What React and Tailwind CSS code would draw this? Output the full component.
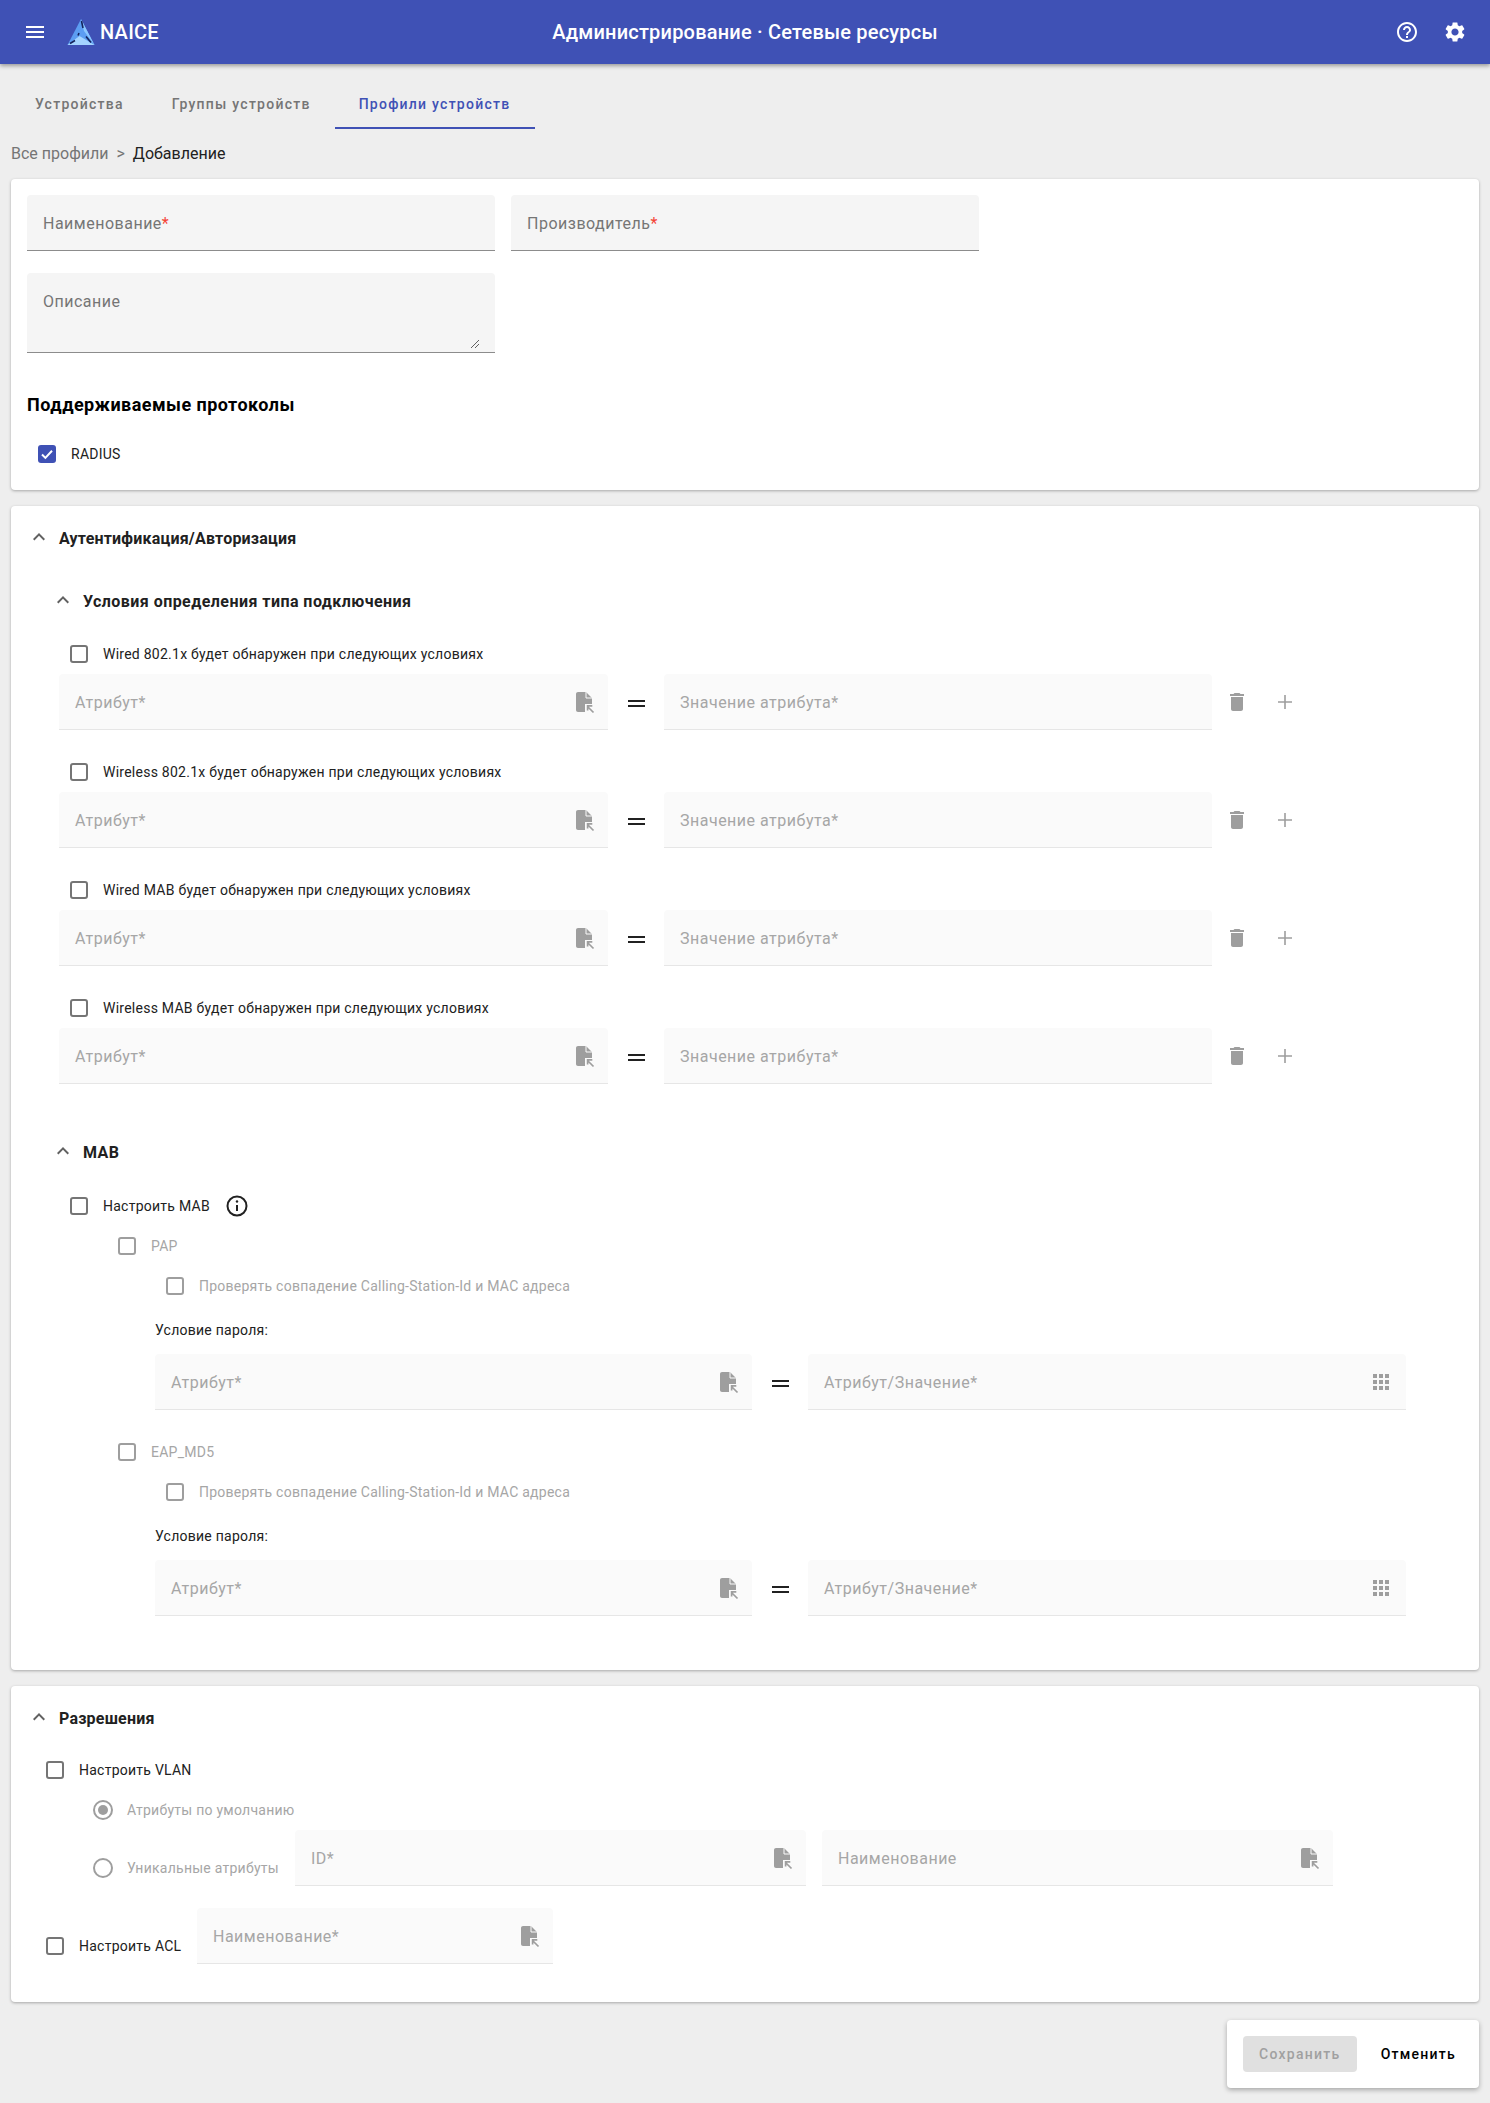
import React from 'react';

const paths = {
  menu: "M3 18h18v-2H3v2zm0-5h18v-2H3v2zm0-7v2h18V6H3z",
  help: "M11 18h2v-2h-2v2zm1-16C6.48 2 2 6.48 2 12s4.48 10 10 10 10-4.48 10-10S17.52 2 12 2zm0 18c-4.41 0-8-3.59-8-8s3.59-8 8-8 8 3.59 8 8-3.59 8-8 8zm0-14c-2.21 0-4 1.79-4 4h2c0-1.1.9-2 2-2s2 .9 2 2c0 2-3 1.75-3 5h2c0-2.25 3-2.5 3-5 0-2.21-1.79-4-4-4z",
  settings: "M19.14,12.94c0.04-0.3,0.06-0.61,0.06-0.94c0-0.32-0.02-0.64-0.07-0.94l2.03-1.58c0.18-0.14,0.23-0.41,0.12-0.61 l-1.92-3.32c-0.12-0.22-0.37-0.29-0.59-0.22l-2.39,0.96c-0.5-0.38-1.03-0.7-1.62-0.94L14.4,2.81c-0.04-0.24-0.24-0.41-0.48-0.41 h-3.84c-0.24,0-0.43,0.17-0.47,0.41L9.25,5.35C8.66,5.59,8.12,5.92,7.63,6.29L5.24,5.33c-0.22-0.08-0.47,0-0.59,0.22L2.74,8.87 C2.62,9.08,2.66,9.34,2.86,9.48l2.03,1.58C4.84,11.36,4.8,11.69,4.8,12s0.02,0.64,0.07,0.94l-2.03,1.58 c-0.18,0.14-0.23,0.41-0.12,0.61l1.92,3.32c0.12,0.22,0.37,0.29,0.59,0.22l2.39-0.96c0.5,0.38,1.03,0.7,1.62,0.94l0.36,2.54 c0.05,0.24,0.24,0.41,0.48,0.41h3.84c0.24,0,0.44-0.17,0.47-0.41l0.36-2.54c0.59-0.24,1.13-0.56,1.62-0.94l2.39,0.96 c0.22,0.08,0.47,0,0.59-0.22l1.92-3.32c0.12-0.22,0.07-0.47-0.12-0.61L19.14,12.94z M12,15.6c-1.98,0-3.6-1.62-3.6-3.6 s1.62-3.6,3.6-3.6s3.6,1.62,3.6,3.6S13.98,15.6,12,15.6z",
  trash: "M6 19c0 1.1.9 2 2 2h8c1.1 0 2-.9 2-2V7H6v12zM19 4h-3.5l-1-1h-5l-1 1H5v2h14V4z",
  chevron: "M12 8l-6 6 1.41 1.41L12 10.83l4.59 4.58L18 14z",
  apps: "M4 8h4V4H4v4zm6 12h4v-4h-4v4zm-6 0h4v-4H4v4zm0-6h4v-4H4v4zm6 0h4v-4h-4v4zm6-10v4h4V4h-4zm-6 4h4V4h-4v4zm6 6h4v-4h-4v4zm0 6h4v-4h-4v4z",
};

function Icon({ name, className }) {
  return (
    <svg viewBox="0 0 24 24" fill="currentColor" className={className}>
      <path d={paths[name]} />
    </svg>
  );
}

function FileIcon() {
  return (
    <svg viewBox="0 0 24 24" className="w-6 h-6 shrink-0 text-[#9e9e9e]">
      <path fill="currentColor" d="M6 2h8l6 6v6h-7v8H6C4.9 22 4 21.1 4 20V4c0-1.1.9-2 2-2z" />
      <path fill="none" stroke="#fafafa" strokeWidth="1" d="M14 2v6h6" />
      <path fill="none" stroke="currentColor" strokeWidth="1.7" d="M16 17l5.5 5.5M15.6 20.5v-4.7h4.7" />
    </svg>
  );
}

function Logo() {
  return (
    <svg viewBox="0 0 28 28" className="w-7 h-7 shrink-0">
      <path fill="#5c9df2" d="M14 1L0.5 27h27z" />
      <path fill="#8cc8ff" d="M14 1l3 12 10.5 14z" />
      <path fill="#a4d4ff" d="M0.5 27l12-9 15 9z" />
      <path fill="none" stroke="#14235c" strokeWidth="1.6" d="M14.5 3l1.5 7M12 15l-1 2.5M3 25.5l5-3M19 18.5l5 6" />
    </svg>
  );
}

function Check({ label, checked, disabled, children }) {
  return (
    <div className={`flex items-center gap-[15px] h-6 text-[14px] tracking-[0.25px] ${disabled ? 'text-[#a6a6a6]' : 'text-[#212121]'}`}>
      {checked ? (
        <span className="w-[18px] h-[18px] shrink-0 rounded-[3px] bg-[#3f51b5] flex items-center justify-center">
          <svg viewBox="0 0 18 18" className="w-[18px] h-[18px]">
            <path d="M4 9.5l3.4 3.4L14 5.8" fill="none" stroke="#fff" strokeWidth="2" />
          </svg>
        </span>
      ) : (
        <span className={`w-[18px] h-[18px] shrink-0 rounded-[3px] border-2 ${disabled ? 'border-[#9e9e9e]' : 'border-[#757575]'}`} />
      )}
      <span className="whitespace-nowrap">{label}</span>
      {children}
    </div>
  );
}

function Radio({ checked }) {
  return (
    <span className="w-5 h-5 shrink-0 rounded-full border-2 border-[#9e9e9e] flex items-center justify-center">
      {checked && <span className="w-[10px] h-[10px] rounded-full bg-[#9e9e9e]" />}
    </span>
  );
}

// filled input, muted when the section is switched off
function Field({ label, required, active, icon, className = '' }) {
  return (
    <div className={`h-14 rounded-t-[4px] flex items-center justify-between pl-4 pr-3 text-[16px] tracking-[0.5px] shrink-0 ${active ? 'bg-[#f5f5f5] border-b border-[#8c8c8c] text-[#757575]' : 'bg-[#fafafa] border-b border-[#e6e6e6] text-[#a6a6a6]'} ${className}`}>
      <span className="whitespace-nowrap mt-[2px]">
        {label}
        {required && <span className={active ? 'text-[#f44336]' : ''}>*</span>}
      </span>
      {icon === 'file' && <FileIcon />}
      {icon === 'apps' && <Icon name="apps" className="w-6 h-6 mr-px text-[#9e9e9e]" />}
    </div>
  );
}

function Equals({ className }) {
  return (
    <div className={`flex justify-center items-center shrink-0 ${className}`}>
      <div className="w-[17px] h-[7px] border-y-2 border-[#212121] mt-[3px]" />
    </div>
  );
}

function SectionTitle({ title, className = '', sub }) {
  return (
    <div className={`flex items-center gap-2 h-6 font-bold text-[#212121] ${sub ? 'pl-10 tracking-[0.45px]' : 'pl-4 tracking-[0.2px]'} ${className}`}>
      <Icon name="chevron" className="w-6 h-6 -mt-1 text-[#616161]" />
      <span className="text-[16px]">{title}</span>
    </div>
  );
}

function ConditionRow({ label }) {
  return (
    <div className="pl-12">
      <div className="pl-[11px]"><Check label={label} /></div>
      <div className="flex items-center mt-2">
        <Field label="Атрибут" required icon="file" className="w-[549px]" />
        <Equals className="w-[56px]" />
        <Field label="Значение атрибута" required className="w-[548px]" />
        <Icon name="trash" className="w-6 h-6 ml-[13px] text-[#9e9e9e]" />
        <svg viewBox="0 0 24 24" className="w-6 h-6 ml-[24px] text-[#9e9e9e]">
          <path d="M12 5v14M5 12h14" stroke="currentColor" strokeWidth="1.6" fill="none" />
        </svg>
      </div>
    </div>
  );
}

function MabMethod({ name, className }) {
  return (
    <div className={className}>
      <div className="pl-[107px]"><Check label={name} disabled /></div>
      <div className="pl-[155px] mt-4"><Check label="Проверять совпадение Calling-Station-Id и MAC адреса" disabled /></div>
      <div className="pl-36 mt-5 h-6 flex items-center text-[14px] tracking-[0.25px] text-[#212121]">Условие пароля:</div>
      <div className="pl-36 mt-3 flex items-center">
        <Field label="Атрибут" required icon="file" className="w-[597px]" />
        <Equals className="w-[56px]" />
        <Field label="Атрибут/Значение" required icon="apps" className="w-[598px]" />
      </div>
    </div>
  );
}

const card = "bg-white rounded-[4px] shadow-[0_1px_3px_rgba(0,0,0,0.3)]";

export default function App() {
  return (
    <div className="min-h-[2103px] bg-[#eeeeee] font-['Roboto',sans-serif] pb-[15px]">
      <header className="h-16 bg-[#3f51b5] text-white grid grid-cols-[1fr_auto_1fr] items-center shadow-[0_2px_4px_rgba(0,0,0,0.35)] relative">
        <div className="flex items-center pl-[23px]">
          <Icon name="menu" className="w-6 h-6" />
          <div className="ml-[20px]"><Logo /></div>
          <span className="ml-[5px] text-[20px] font-medium tracking-[0.25px]">NAICE</span>
        </div>
        <div className="text-[20px] font-medium tracking-[0.2px]">Администрирование · Сетевые ресурсы</div>
        <div className="flex items-center justify-end gap-6 pr-[23px]">
          <Icon name="help" className="w-6 h-6" />
          <Icon name="settings" className="w-6 h-6" />
        </div>
      </header>

      <nav className="flex mt-4 pl-[11px] h-[49px] text-[14px] font-medium tracking-[1.25px] text-[#757575]">
        <div className="px-6 flex items-center">Устройства</div>
        <div className="px-6 flex items-center">Группы устройств</div>
        <div className="px-6 flex items-center text-[#3f51b5] border-y-2 border-t-transparent border-b-[#3f51b5] w-[200px]">Профили устройств</div>
      </nav>

      <div className="mt-[13px] px-[11px] h-6 flex items-center text-[16px] text-[#757575]">
        Все профили<span className="mx-2">&gt;</span><span className="text-[#212121]">Добавление</span>
      </div>

      <main className="px-[11px] mt-[13px] flex flex-col gap-4">
        <section className={`${card} px-4 pt-4 pb-6`}>
          <div className="flex gap-4">
            <Field label="Наименование" required active className="w-[468px]" />
            <Field label="Производитель" required active className="w-[468px]" />
          </div>
          <div className="relative mt-[22px] w-[468px] h-[80px] rounded-t-[4px] bg-[#f5f5f5] border-b border-[#8c8c8c] px-4 pt-[17px] text-[16px] tracking-[0.5px] text-[#757575]">
            Описание
            <svg viewBox="0 0 8 8" className="absolute right-4 bottom-1 w-2 h-2 text-[#616161]">
              <path d="M0 8L8 0M4 8l4-4" stroke="currentColor" strokeWidth="1" fill="none" />
            </svg>
          </div>
          <h2 className="mt-[39px] h-6 flex items-center text-[18px] font-bold tracking-[0.45px] text-black">Поддерживаемые протоколы</h2>
          <div className="mt-[26px] pl-[11px]"><Check label="RADIUS" checked /></div>
        </section>

        <section className={`${card} pt-[21px] pb-[54px]`}>
          <SectionTitle title="Аутентификация/Авторизация" />
          <SectionTitle title="Условия определения типа подключения" sub className="mt-[39px]" />
          <div className="mt-7 flex flex-col gap-[30px]">
            <ConditionRow label="Wired 802.1x будет обнаружен при следующих условиях" />
            <ConditionRow label="Wireless 802.1x будет обнаружен при следующих условиях" />
            <ConditionRow label="Wired MAB будет обнаружен при следующих условиях" />
            <ConditionRow label="Wireless MAB будет обнаружен при следующих условиях" />
          </div>
          <SectionTitle title="MAB" sub className="mt-[57px]" />
          <div className="pl-[59px] mt-[29px]">
            <Check label="Настроить MAB">
              <svg viewBox="0 0 24 24" className="w-6 h-6 text-[#212121]" fill="none" stroke="currentColor">
                <circle cx="12" cy="12" r="9.5" strokeWidth="2" />
                <path d="M12 11v6" strokeWidth="2" />
                <circle cx="12" cy="7.5" r="1.2" fill="currentColor" stroke="none" />
              </svg>
            </Check>
          </div>
          <MabMethod name="PAP" className="mt-4" />
          <MabMethod name="EAP_MD5" className="mt-[30px]" />
        </section>

        <section className={`${card} pt-[21px] pb-[38px]`}>
          <SectionTitle title="Разрешения" />
          <div className="pl-[35px] mt-[27px]"><Check label="Настроить VLAN" /></div>
          <div className="pl-[82px] mt-4 h-6 flex items-center gap-[14px] text-[14px] tracking-[0.25px] text-[#a6a6a6]">
            <Radio checked />
            <span>Атрибуты по умолчанию</span>
          </div>
          <div className="pl-[82px] mt-2 flex text-[14px] tracking-[0.25px] text-[#a6a6a6]">
            <div className="flex items-center gap-[14px] h-6 mt-[26px]">
              <Radio />
              <span className="whitespace-nowrap w-[168px]">Уникальные атрибуты</span>
            </div>
            <Field label="ID" required icon="file" className="w-[511px]" />
            <Field label="Наименование" icon="file" className="w-[511px] ml-4" />
          </div>
          <div className="pl-[35px] mt-[22px] flex">
            <div className="mt-[26px] w-[151px]"><Check label="Настроить ACL" /></div>
            <Field label="Наименование" required icon="file" className="w-[356px]" />
          </div>
        </section>
      </main>

      <div className="px-[11px] mt-[18px] flex justify-end">
        <div className={`${card} p-4 pr-[23px] flex items-center gap-6 shadow-[0_2px_5px_rgba(0,0,0,0.3)]`}>
          <div className="h-9 w-[114px] rounded-[4px] bg-[#e0e0e0] flex items-center justify-center text-[14px] font-medium tracking-[1.25px] text-[#a0a0a0]">Сохранить</div>
          <div className="text-[14px] font-medium tracking-[1.25px] text-black">Отменить</div>
        </div>
      </div>
    </div>
  );
}
